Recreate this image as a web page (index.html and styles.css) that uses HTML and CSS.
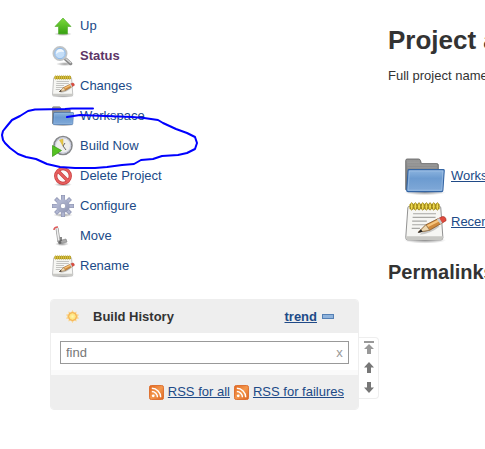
FILE: index.html
```html
<!DOCTYPE html>
<html lang="en">
<head>
<meta charset="utf-8">
<title>Project</title>
<link rel="stylesheet" href="styles.css">
</head>
<body>
<svg class="defs" width="0" height="0" aria-hidden="true">
  <defs>
    <linearGradient id="green" x1="0" y1="0" x2="0" y2="1"><stop offset="0" stop-color="#7ddb3c"/><stop offset="1" stop-color="#36a010"/></linearGradient>
    <linearGradient id="blue" x1="0" y1="0" x2="0" y2="1"><stop offset="0" stop-color="#8db5e0"/><stop offset=".4" stop-color="#6c9bd0"/><stop offset="1" stop-color="#80a9d8"/></linearGradient>
    <linearGradient id="grey" x1="0" y1="0" x2="0" y2="1"><stop offset="0" stop-color="#999"/><stop offset="1" stop-color="#6c6c6c"/></linearGradient>
    <linearGradient id="orange" x1="0" y1="0" x2="1" y2="1"><stop offset="0" stop-color="#e2661d"/><stop offset=".5" stop-color="#f4984e"/><stop offset="1" stop-color="#dc6420"/></linearGradient>
    <linearGradient id="gearfill" x1="0" y1="0" x2="1" y2="1"><stop offset="0" stop-color="#bcc2da"/><stop offset="1" stop-color="#8c92b0"/></linearGradient>
    <radialGradient id="shade"><stop offset="0" stop-color="#000" stop-opacity=".4"/><stop offset="1" stop-color="#000" stop-opacity="0"/></radialGradient>
    <radialGradient id="sunfill"><stop offset="0" stop-color="#fff6b0"/><stop offset="1" stop-color="#fddb68"/></radialGradient>
    <symbol id="folder" viewBox="0 0 48 48">
      <ellipse cx="24" cy="42" rx="23" ry="3" fill="url(#shade)"/>
      <path d="M3 39V7q0-1.500 1.500-1.500H17q1.500 0 2 1.500l1 3.500h17q1.500 0 1.500 1.500V39z" fill="url(#grey)" stroke="#666"/>
      <path d="M5 9h13M5 12h32M5 15h32" stroke="#aaa" opacity=".5"/>
      <path d="M6.500 17H44q1 0 1 1l-1.500 21.500q0 1.500-1.500 1.500H5.500Q4 41 4 39.500L5.500 18q0-1 1-1z" fill="url(#blue)" stroke="#3465a4" stroke-width="1.200"/>
      <path d="M7 18.500h36.500l-1.200 21H5.500z" fill="none" stroke="#b5cfeb" opacity=".5"/>
    </symbol>
    <symbol id="notepad" viewBox="0 0 48 48">
      <ellipse cx="24" cy="44" rx="23" ry="3.500" fill="url(#shade)"/>
      <path d="M6.500 7H40q1 0 1.200 1.500L43.500 41q0 2.500-2 2.500H5q-2 0-2-2.500L5.300 8.500Q5.500 7 6.500 7z" fill="#f6f6f3" stroke="#888"/>
      <path d="M3.500 39.500h40l-.2 2.500q0 1.500-2 1.500H5.500q-2 0-2-2z" fill="#c8c8c4"/>
      <path d="M7 4.500h33v5.500H7z" fill="#c9ad2c"/>
      <g fill="#efd94f" stroke="#8f7810" stroke-width=".9"><ellipse cx="9.500" cy="7" rx="1.600" ry="4"/><ellipse cx="13.500" cy="7" rx="1.600" ry="4"/><ellipse cx="17.500" cy="7" rx="1.600" ry="4"/><ellipse cx="21.500" cy="7" rx="1.600" ry="4"/><ellipse cx="25.500" cy="7" rx="1.600" ry="4"/><ellipse cx="29.500" cy="7" rx="1.600" ry="4"/><ellipse cx="33.500" cy="7" rx="1.600" ry="4"/><ellipse cx="37.500" cy="7" rx="1.600" ry="4"/></g>
      <path d="M11 15h25M10.500 19h25M10 23h16M10 27h18M9.500 31h9" stroke="#a8a8a5" stroke-width="1.300"/>
      <path d="M18 38q12-1 22-9l-4-2-14 7z" fill="#000" opacity=".18"/>
      <path d="m17 35 8-8 14-7 4 5-14 8z" fill="#d08a3c" stroke="#8a5a2a" stroke-width=".9"/>
      <path d="m26 27.500 13-6.500 1.500 2-13 6.500z" fill="#f7c57c"/>
      <path d="m39 20 4-2q4 0 4 4.500L43 25z" fill="#df4a3e" stroke="#a52e20" stroke-width=".7"/>
      <path d="m37 21 2.500-1.300L43 25l-2.200 1.300z" fill="#ccc"/>
      <path d="m17 35 8-8 4 6z" fill="#eed8b0" stroke="#8f7550" stroke-width=".8"/><path d="m16 36 3.500-4 2 2.500z" fill="#222"/>
    </symbol>
    <symbol id="rss" viewBox="0 0 16 16">
      <rect x=".5" y=".5" width="15" height="15" rx="2" fill="url(#orange)" stroke="#dd6d2c"/>
      <circle cx="4.500" cy="11.500" r="1.500" fill="#fff"/>
      <path d="M3 7a6 6 0 0 1 6 6M3 3.500A9.500 9.500 0 0 1 12.500 13" fill="none" stroke="#fff" stroke-width="1.500"/>
    </symbol>
  </defs>
</svg>

<div class="page">
  <aside class="side">
    <nav class="tasks" aria-label="Tasks">
      <a href="#"><svg viewBox="0 0 24 24"><ellipse cx="12" cy="20" rx="9" ry="2" fill="url(#shade)"/><path d="m12 4 8 8.500h-3.500V20h-9v-7.500H4z" fill="url(#green)" stroke="#5caf38" stroke-width=".7"/></svg>Up</a>
      <a href="#" class="current"><svg viewBox="0 0 24 24"><ellipse cx="14" cy="20" rx="9" ry="2" fill="url(#shade)"/><path d="m14.500 15 5 4.500" stroke="#888" stroke-width="3.500" stroke-linecap="round"/><path d="m14.500 14.500 5.500 4.500" stroke="#d5d5d5" stroke-width="1.500"/><circle cx="9" cy="9.500" r="6.500" fill="#c4def8" stroke="#c0c4c6" stroke-width="2"/><circle cx="9" cy="9.500" r="5.200" fill="none" stroke="#8fbaea"/><path d="M5 10q0-5 5-5 3 1 3 3-5-1-8 2" fill="#f2f8fd"/></svg>Status</a>
      <a href="#"><svg><use href="#notepad"/></svg>Changes</a>
      <a href="#"><svg><use href="#folder"/></svg>Workspace</a>
      <a href="#"><svg viewBox="0 0 24 24"><circle cx="12" cy="11.500" r="9" fill="#eeeeec" stroke="#85878a" stroke-width="1.600"/><circle cx="12" cy="11.500" r="7.600" fill="none" stroke="#c4c8dc"/><path d="m12 12-3.500-6 3.500-1z" fill="#e6c646" stroke="#c9ab34" stroke-width=".5"/><path d="m12 12 2-3M12 12l3 4" stroke="#666"/><path d="M1.500 11.500v11l9-6z" fill="#55c222" stroke="#379412" stroke-width=".7"/></svg>Build Now</a>
      <a href="#"><svg viewBox="0 0 24 24"><ellipse cx="12" cy="20.500" rx="9" ry="2" fill="url(#shade)"/><circle cx="12" cy="12" r="7.300" fill="#fafafa" stroke="#c83a3a" stroke-width="3.200"/><path d="m7 7 10 10" stroke="#c83a3a" stroke-width="3.200"/><circle cx="12" cy="12" r="7.300" fill="none" stroke="#e76060" stroke-width="1.800"/><path d="m7 7 10 10" stroke="#e76060" stroke-width="1.800"/></svg>Delete Project</a>
      <a href="#"><svg viewBox="0 0 24 24"><ellipse cx="12" cy="21" rx="10" ry="2" fill="url(#shade)"/><g stroke="#8d93b0" stroke-width="4"><path d="M12 1v22M1 12h22M4.500 4.500l15 15M19.500 4.500l-15 15"/></g><g stroke="#afb5d0" stroke-width="2.800"><path d="M12 1.500v21M1.500 12h21M5 5l14 14M19 5 5 19"/></g><circle cx="12" cy="12" r="6.800" fill="url(#gearfill)"/><circle cx="12" cy="12" r="2.800" fill="#fff" stroke="#9aa0bc"/></svg>Configure</a>
      <a href="#"><svg viewBox="0 0 24 24"><ellipse cx="11" cy="20" rx="7" ry="2" fill="url(#shade)"/><path d="m6 4 2 14" stroke="#999" stroke-width="3"/><path d="m6 4 2 14" stroke="#eee" stroke-width="1.600"/><path d="M3 6q0-3 4-3" fill="none" stroke="#dd5b5b" stroke-width="1.600"/><path d="m7 17 8-2 1 3-8 2z" fill="#aaa" stroke="#888" stroke-width=".7"/><path d="M10 13v4" stroke="#555" stroke-width="1.400"/><circle cx="9" cy="18.500" r="1.400" fill="#666"/></svg>Move</a>
      <a href="#"><svg><use href="#notepad"/></svg>Rename</a>
    </nav>

    <div class="history-wrap">
      <section class="history">
        <header>
          <svg class="sun" viewBox="0 0 16 16"><path d="m8 1 1.600 2.700 2.800-1-.4 2.700 3 .6L13.500 8l1.500 2-3 .6.400 2.700-2.800-1L8 15l-1.600-2.700-2.800 1 .4-2.700-3-.6L2.500 8 1 6l3-.6-.4-2.700 2.800 1z" fill="#fad48a"/><circle cx="8" cy="8" r="4.200" fill="url(#sunfill)" stroke="#f2a850"/></svg>
          <h2>Build History</h2>
          <a href="#">trend</a>
          <button class="collapse" type="button" aria-label="Collapse"></button>
        </header>
        <form class="search">
          <div class="field">
            <input type="text" placeholder="find" aria-label="find">
            <button type="reset">x</button>
          </div>
        </form>
        <footer>
          <svg><use href="#rss"/></svg><a href="#">RSS for all</a>
          <svg><use href="#rss"/></svg><a href="#">RSS for failures</a>
        </footer>
      </section>
      <div class="pager">
        <button type="button" aria-label="Newest"><svg viewBox="0 0 12 14"><path d="M1 0h10v2H1zM6 3l5 5H8v5H4V8H1z" fill="#999"/></svg></button>
        <button type="button" aria-label="Newer"><svg viewBox="0 0 12 14"><path d="m6 1 5 5.500H8V12H4V6.500H1z" fill="#777"/></svg></button>
        <button type="button" aria-label="Older"><svg viewBox="0 0 12 14"><path d="m6 12 5-5.500H8V1H4v5.500H1z" fill="#777"/></svg></button>
      </div>
    </div>
  </aside>

  <main class="main">
    <h1>Project a</h1>
    <p>Full project name</p>
    <ul class="links">
      <li><svg><use href="#folder"/></svg><a href="#">Workspace</a></li>
      <li><svg><use href="#notepad"/></svg><a href="#">Recent Changes</a></li>
    </ul>
    <h2>Permalinks</h2>
  </main>

  <svg class="marker" viewBox="0 0 200 64" aria-hidden="true"><path d="M93 3.500H72L65 4 35 4.500 28 6 20 11 12 15 7 21 3 26 2 30 3 35 5 38 10 43 18 49 26 52 36 54 47 59 60 62 75 63 95 63 107 62 122 60 134 59 141 55 153 54 162 51 178 50 187 48 195 44 197 38 195 32 187 28 176 24 163 18 158 15 144 13 132 12 106 11 80 10 67 12"/></svg>
</div>
</body>
</html>
```

FILE: styles.css
```css
* {
  box-sizing: border-box;
}

body {
  margin: 0;
  background: #fff;
  color: #333;
  font: 13px/20px "Liberation Sans", Arial, sans-serif;
}

a {
  color: #204a87;
}

h1,
h2,
p,
ul {
  margin: 0;
  padding: 0;
}

button {
  padding: 0;
  border: 0;
  background: none;
  font: inherit;
}

.defs {
  position: absolute;
}

.page {
  position: relative;
  display: flex;
  overflow: hidden;
}

.side {
  flex: none;
  padding: 11px 9px 38px 50px;
}

.tasks {
  display: flex;
  flex-direction: column;
}

.tasks a {
  display: flex;
  align-items: center;
  gap: 5px;
  height: 30px;
  padding-left: 1px;
  text-decoration: none;
}

.tasks .current {
  color: #5c3566;
  font-weight: bold;
}

.tasks svg {
  width: 24px;
  height: 24px;
}

.history-wrap {
  display: flex;
  align-items: center;
  margin-top: 18px;
}

.history {
  width: 309px;
  border: 1px solid #eee;
  border-radius: 4px;
  overflow: hidden;
}

.history header {
  display: flex;
  align-items: center;
  height: 33px;
  padding: 0 24px 0 14px;
  background: #eee;
  font-weight: bold;
}

.history h2 {
  flex: 1;
  margin-left: 13px;
  font-size: 13px;
}

.sun {
  width: 15px;
  height: 15px;
}

.collapse {
  width: 12px;
  height: 5px;
  margin-left: 5px;
  border: 1px solid #5580b4;
  background: #8fb3dc;
}

.search {
  padding: 8px 9px 6px;
  border-bottom: 5px solid #fafafa;
}

.field {
  display: flex;
  height: 23px;
  border: 1px solid #999;
}

.field input {
  flex: 1;
  min-width: 0;
  padding: 0 5px;
  border: 0;
  font: inherit;
}

.field input::placeholder {
  color: #777;
}

.field button {
  width: 17px;
  color: #999;
}

.history footer {
  display: flex;
  align-items: center;
  justify-content: flex-end;
  gap: 4px;
  height: 34px;
  padding-right: 14px;
  background: #eee;
}

.history footer svg {
  width: 15px;
  height: 15px;
}

.pager {
  display: flex;
  flex-direction: column;
  justify-content: space-around;
  width: 20px;
  height: 62px;
  margin-top: 26px;
  border: 1px solid #eee;
  border-left: 0;
  border-radius: 0 4px 4px 0;
}

.pager button {
  height: 14px;
}

.pager svg {
  display: block;
  width: 12px;
  height: 14px;
  margin: auto;
}

.main {
  flex: 1;
  min-width: 0;
  padding-top: 25px;
  white-space: nowrap;
}

.main h1 {
  font-size: 26px;
  line-height: 30px;
}

.main p {
  margin-top: 11px;
}

.links {
  margin: 67px 0 0 15px;
  list-style: none;
}

.links li {
  display: flex;
  align-items: center;
  gap: 4px;
  height: 46px;
}

.links svg {
  flex: none;
  width: 44px;
  height: 44px;
}

.main h2 {
  margin-top: 15px;
  font-size: 20px;
  line-height: 24px;
}

.marker {
  position: absolute;
  top: 105px;
  left: 0;
  width: 200px;
  height: 64px;
  fill: none;
  stroke: #00f;
  stroke-width: 2;
  stroke-linejoin: round;
  stroke-linecap: round;
  pointer-events: none;
}
```
